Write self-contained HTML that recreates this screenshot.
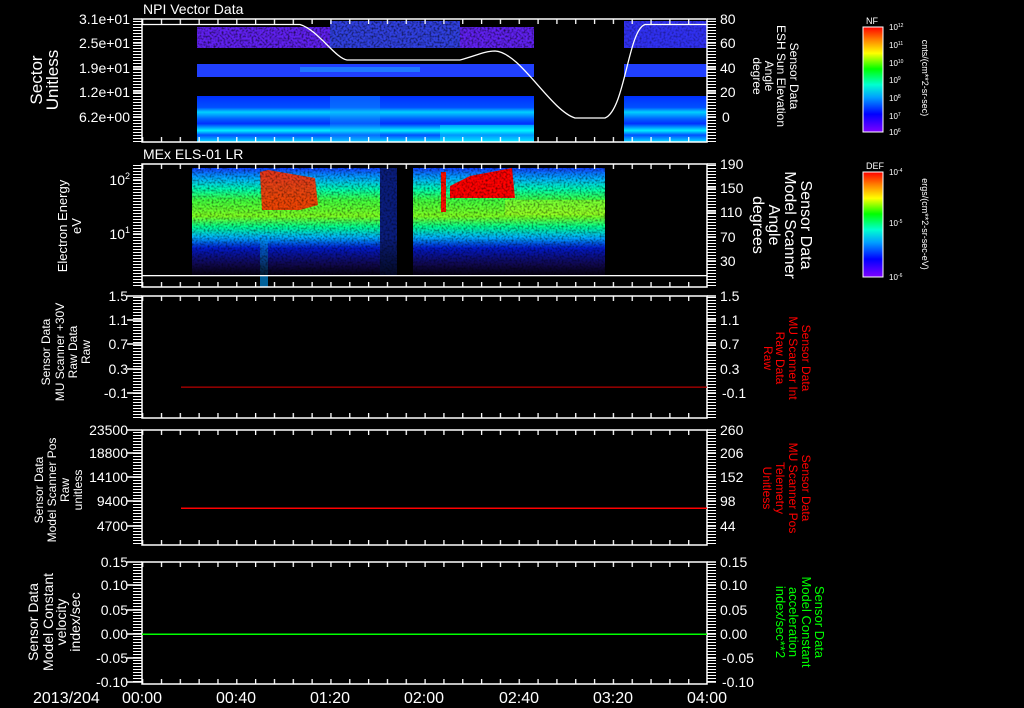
<!DOCTYPE html>
<html><head><meta charset="utf-8"><style>
html,body{margin:0;padding:0;background:#000;width:1024px;height:708px;overflow:hidden}
svg{display:block}
text{font-family:"Liberation Sans",sans-serif;fill:#fff}
</style></head><body>
<svg width="1024" height="708" viewBox="0 0 1024 708" xmlns="http://www.w3.org/2000/svg">
<defs>
<pattern id="mt" width="10" height="3" patternUnits="userSpaceOnUse"><rect x="0" y="0" width="10" height="1" fill="#fff"/></pattern>
<pattern id="xt" width="18.83" height="10" patternUnits="userSpaceOnUse" x="142"><rect x="0" y="0" width="1.3" height="10" fill="#fff"/></pattern>
<linearGradient id="rb" x1="0" y1="1" x2="0" y2="0">
<stop offset="0" stop-color="#8000ff"/><stop offset="0.17" stop-color="#0000ff"/><stop offset="0.33" stop-color="#00a0ff"/><stop offset="0.45" stop-color="#00ffd0"/><stop offset="0.6" stop-color="#00ff00"/><stop offset="0.75" stop-color="#ffff00"/><stop offset="0.88" stop-color="#ff8000"/><stop offset="1" stop-color="#ff0000"/></linearGradient>
<linearGradient id="p2" x1="0" y1="0" x2="0" y2="1">
<stop offset="0" stop-color="#1040ff"/><stop offset="0.1" stop-color="#00b0ff"/><stop offset="0.2" stop-color="#00ffb0"/><stop offset="0.3" stop-color="#40ff40"/><stop offset="0.45" stop-color="#80ff20"/><stop offset="0.55" stop-color="#00ff90"/><stop offset="0.65" stop-color="#00b0ff"/><stop offset="0.75" stop-color="#0020ff"/><stop offset="0.9" stop-color="#2010a0"/><stop offset="1" stop-color="#100040"/></linearGradient>
<linearGradient id="dk" x1="0" y1="0" x2="0" y2="1">
<stop offset="0" stop-color="#000" stop-opacity="0"/><stop offset="0.65" stop-color="#000" stop-opacity="0"/><stop offset="1" stop-color="#000" stop-opacity="0.7"/></linearGradient>
<linearGradient id="b1" x1="0" y1="0" x2="0" y2="1">
<stop offset="0" stop-color="#0030ff"/><stop offset="0.25" stop-color="#0050ff"/><stop offset="0.35" stop-color="#00d0ff"/><stop offset="0.5" stop-color="#0060ff"/><stop offset="0.6" stop-color="#0030ff"/><stop offset="0.75" stop-color="#00f0ff"/><stop offset="0.85" stop-color="#0050ff"/><stop offset="1" stop-color="#00e0ff"/></linearGradient>
<filter id="nz"><feTurbulence type="fractalNoise" baseFrequency="0.5" numOctaves="1" seed="3"/><feColorMatrix values="0 0 0 0 0 0 0 0 0 0 0 0 0 0 0 0 0 0 -2.2 1.3"/><feComposite in2="SourceGraphic" operator="in"/></filter>
</defs>

<text x="143" y="14" font-size="14">NPI Vector Data</text>
<text x="143" y="159" font-size="14">MEx ELS-01 LR</text>

<!-- Panel 1 data -->
<rect x="197" y="27" width="337" height="21" fill="#6020f0"/>
<rect x="330" y="21" width="130" height="27" fill="#3040e0"/>
<rect x="197" y="64" width="337" height="13" fill="#2040ff"/>
<rect x="300" y="67" width="120" height="5" fill="#20a0ff" opacity="0.6"/>
<rect x="197" y="96" width="337" height="46" fill="url(#b1)"/>
<rect x="330" y="96" width="50" height="46" fill="#10a0ff" opacity="0.35"/>
<rect x="440" y="125" width="94" height="17" fill="#00ffff" opacity="0.4"/>
<rect x="624" y="21" width="83" height="27" fill="#3030f0"/>
<rect x="624" y="64" width="83" height="13" fill="#2040ff"/>
<rect x="624" y="96" width="83" height="46" fill="url(#b1)"/>
<rect x="197" y="21" width="337" height="27" fill="#000" filter="url(#nz)" opacity="0.7"/>
<rect x="624" y="21" width="83" height="27" fill="#000" filter="url(#nz)" opacity="0.4"/>
<path d="M142 24.5 L300 24.5 C318 30 335 58 347 60 L460 60 C475 56 485 51 495 51 C520 52 550 110 575 118 L605 118 C625 110 628 30 645 24.5 L707 24.5" stroke="#fff" stroke-width="1.3" fill="none"/>

<!-- Panel 2 data -->
<rect x="192" y="168" width="188" height="107" fill="url(#p2)"/>
<rect x="380" y="168" width="17" height="107" fill="#1030d0" opacity="0.6"/>
<rect x="413" y="168" width="192" height="107" fill="url(#p2)"/>
<path d="M260 172 L268 170 L315 178 L318 205 L300 210 L262 210 Z" fill="#ff3000" opacity="0.9"/>
<path d="M450 198 L450 186 L470 176 L512 168 L515 198 Z" fill="#ff0000"/>
<rect x="441" y="172" width="5" height="40" fill="#ff1000"/>
<rect x="505" y="200" width="100" height="15" fill="#c0ff20" opacity="0.4"/>
<rect x="260" y="235" width="8" height="52" fill="#00a0ff" opacity="0.6"/>
<rect x="192" y="168" width="413" height="107" fill="#000" filter="url(#nz)" opacity="0.55"/>
<rect x="192" y="168" width="413" height="107" fill="url(#dk)"/>
<rect x="142" y="275" width="565" height="1.3" fill="#fff"/>

<g fill="none" stroke="#fff" stroke-width="1.5">
<rect x="142" y="19" width="565" height="123"/>
<rect x="142" y="164" width="565" height="123"/>
<rect x="142" y="296" width="565" height="122"/>
<rect x="142" y="430" width="565" height="115"/>
<rect x="142" y="562" width="565" height="122"/>
</g>
<g fill="url(#mt)">
<rect x="133" y="20" width="9" height="122"/><rect x="707" y="20" width="9" height="122"/>
<rect x="133" y="165" width="9" height="122"/><rect x="707" y="165" width="9" height="122"/>
<rect x="133" y="297" width="9" height="121"/><rect x="707" y="297" width="9" height="121"/>
<rect x="133" y="431" width="9" height="114"/><rect x="707" y="431" width="9" height="114"/>
<rect x="133" y="563" width="9" height="121"/><rect x="707" y="563" width="9" height="121"/>
</g>
<g fill="url(#xt)">
<rect x="142" y="19" width="565" height="5"/><rect x="142" y="137" width="565" height="5"/>
<rect x="142" y="164" width="565" height="5"/><rect x="142" y="282" width="565" height="5"/>
<rect x="142" y="296" width="565" height="5"/><rect x="142" y="413" width="565" height="5"/>
<rect x="142" y="430" width="565" height="5"/><rect x="142" y="540" width="565" height="5"/>
<rect x="142" y="562" width="565" height="5"/><rect x="142" y="679" width="565" height="5"/>
</g>
<g stroke="#fff" stroke-width="1.5">
<path d="M133 19H142M133 43H142M133 68H142M133 92H142M133 117H142M707 43H716M707 68H716M707 92H716M707 117H716M707 19H716"/>
<path d="M133 180H142M133 234H142M707 188H716M707 212H716M707 237H716M707 261H716M707 164H716"/>
<path d="M127 296H142M127 320H142M127 344H142M127 369H142M127 393H142M707 296H716M707 320H716M707 344H716M707 369H716M707 393H716"/>
<path d="M127 430H142M127 453H142M127 477H142M127 501H142M127 526H142M707 430H716M707 453H716M707 477H716M707 501H716M707 526H716"/>
<path d="M127 562H142M127 585H142M127 610H142M127 634H142M127 658H142M127 682H142M707 562H716M707 585H716M707 610H716M707 634H716M707 658H716M707 682H716"/>
</g>
<rect x="181" y="386.5" width="526" height="1.3" fill="#b00000"/>
<rect x="181" y="507.5" width="526" height="1.5" fill="#ff0000"/>
<rect x="142" y="633.5" width="565" height="1.5" fill="#00ff00"/>

<g font-size="14" text-anchor="end">
<text x="130" y="24">3.1e+01</text><text x="130" y="48">2.5e+01</text><text x="130" y="73">1.9e+01</text><text x="130" y="97">1.2e+01</text><text x="130" y="122">6.2e+00</text>
<text x="130" y="185">10<tspan font-size="9" dy="-6">2</tspan></text><text x="130" y="239">10<tspan font-size="9" dy="-6">1</tspan></text>
<text x="128" y="301">1.5</text><text x="128" y="325">1.1</text><text x="128" y="349">0.7</text><text x="128" y="374">0.3</text><text x="128" y="398">-0.1</text>
<text x="128" y="435">23500</text><text x="128" y="458">18800</text><text x="128" y="482">14100</text><text x="128" y="506">9400</text><text x="128" y="531">4700</text>
<text x="128" y="567">0.15</text><text x="128" y="590">0.10</text><text x="128" y="615">0.05</text><text x="128" y="639">0.00</text><text x="128" y="663">-0.05</text><text x="128" y="687">-0.10</text>
</g>
<g font-size="14">
<text x="720" y="24">80</text><text x="720" y="48">60</text><text x="720" y="73">40</text><text x="720" y="97">20</text><text x="722" y="122">0</text>
<text x="720" y="169">190</text><text x="720" y="193">150</text><text x="720" y="217">110</text><text x="720" y="242">70</text><text x="720" y="266">30</text>
<text x="720" y="301">1.5</text><text x="720" y="325">1.1</text><text x="720" y="349">0.7</text><text x="720" y="374">0.3</text><text x="722" y="398">-0.1</text>
<text x="720" y="435">260</text><text x="720" y="458">206</text><text x="720" y="482">152</text><text x="720" y="506">98</text><text x="720" y="531">44</text>
<text x="720" y="567">0.15</text><text x="720" y="590">0.10</text><text x="720" y="615">0.05</text><text x="720" y="639">0.00</text><text x="722" y="663">-0.05</text><text x="722" y="687">-0.10</text>
</g>
<g font-size="16">
<text x="33" y="703">2013/204</text>
<text x="142" y="703" text-anchor="middle">00:00</text>
<text x="236" y="703" text-anchor="middle">00:40</text>
<text x="330" y="703" text-anchor="middle">01:20</text>
<text x="424" y="703" text-anchor="middle">02:00</text>
<text x="519" y="703" text-anchor="middle">02:40</text>
<text x="613" y="703" text-anchor="middle">03:20</text>
<text x="707" y="703" text-anchor="middle">04:00</text>
</g>

<g text-anchor="middle">
<text font-size="17" transform="translate(42,80) rotate(-90)">Sector</text>
<text font-size="17" transform="translate(58,80) rotate(-90)">Unitless</text>
<text font-size="13" transform="translate(67,226) rotate(-90)">Electron Energy</text>
<text font-size="13" transform="translate(81,226) rotate(-90)">eV</text>
<text font-size="12" transform="translate(50,352) rotate(-90)">Sensor Data</text>
<text font-size="12" transform="translate(64,352) rotate(-90)">MU Scanner +30V</text>
<text font-size="12" transform="translate(77,352) rotate(-90)">Raw Data</text>
<text font-size="12" transform="translate(90,352) rotate(-90)">Raw</text>
<text font-size="12" transform="translate(43,490) rotate(-90)">Sensor Data</text>
<text font-size="12" transform="translate(56,490) rotate(-90)">Model Scanner Pos</text>
<text font-size="12" transform="translate(69,490) rotate(-90)">Raw</text>
<text font-size="12" transform="translate(82,490) rotate(-90)">unitless</text>
<text font-size="14" transform="translate(38,622) rotate(-90)">Sensor Data</text>
<text font-size="14" transform="translate(53,622) rotate(-90)">Model Constant</text>
<text font-size="14" transform="translate(66,622) rotate(-90)">velocity</text>
<text font-size="14" transform="translate(80,622) rotate(-90)">index/sec</text>
</g>
<g text-anchor="middle">
<text font-size="12" transform="translate(790,76) rotate(90)">Sensor Data</text>
<text font-size="12" transform="translate(777,76) rotate(90)">ESH Sun Elevation</text>
<text font-size="12" transform="translate(765,76) rotate(90)">Angle</text>
<text font-size="12" transform="translate(753,76) rotate(90)">degree</text>
<text font-size="16" transform="translate(801,225) rotate(90)">Sensor Data</text>
<text font-size="16" transform="translate(785,225) rotate(90)">Model Scanner</text>
<text font-size="16" transform="translate(769,225) rotate(90)">Angle</text>
<text font-size="16" transform="translate(753,225) rotate(90)">degrees</text>
</g>
<g text-anchor="middle" font-size="12">
<text style="fill:#f00" transform="translate(802,358) rotate(90)">Sensor Data</text>
<text style="fill:#f00" transform="translate(789,358) rotate(90)">MU Scanner Int</text>
<text style="fill:#f00" transform="translate(776,358) rotate(90)">Raw Data</text>
<text style="fill:#f00" transform="translate(764,358) rotate(90)">Raw</text>
<text style="fill:#f00" transform="translate(802,488) rotate(90)">Sensor Data</text>
<text style="fill:#f00" transform="translate(789,488) rotate(90)">MU Scanner Pos</text>
<text style="fill:#f00" transform="translate(776,488) rotate(90)">Telemetry</text>
<text style="fill:#f00" transform="translate(763,488) rotate(90)">Unitless</text>
<text style="fill:#0f0" font-size="13" transform="translate(815,622) rotate(90)">Sensor Data</text>
<text style="fill:#0f0" font-size="13" transform="translate(802,622) rotate(90)">Model Constant</text>
<text style="fill:#0f0" font-size="13" transform="translate(789,622) rotate(90)">acceleration</text>
<text style="fill:#0f0" font-size="13" transform="translate(776,622) rotate(90)">index/sec**2</text>
</g>

<rect x="863" y="27" width="20" height="105" fill="url(#rb)" stroke="#fff" stroke-width="1"/>
<text x="866" y="24" font-size="9">NF</text>
<g font-size="8">
<text x="889" y="30">10<tspan font-size="5" dy="-3">12</tspan></text>
<text x="889" y="48">10<tspan font-size="5" dy="-3">11</tspan></text>
<text x="889" y="66">10<tspan font-size="5" dy="-3">10</tspan></text>
<text x="889" y="83">10<tspan font-size="5" dy="-3">9</tspan></text>
<text x="889" y="101">10<tspan font-size="5" dy="-3">8</tspan></text>
<text x="889" y="119">10<tspan font-size="5" dy="-3">7</tspan></text>
<text x="889" y="135">10<tspan font-size="5" dy="-3">6</tspan></text>
</g>
<text font-size="9" text-anchor="middle" transform="translate(922,78) rotate(90)">cnts/(cm**2-sr-sec)</text>
<rect x="863" y="172" width="20" height="105" fill="url(#rb)" stroke="#fff" stroke-width="1"/>
<text x="866" y="169" font-size="9">DEF</text>
<g font-size="8">
<text x="889" y="175">10<tspan font-size="5" dy="-3">-4</tspan></text>
<text x="889" y="226">10<tspan font-size="5" dy="-3">-5</tspan></text>
<text x="889" y="280">10<tspan font-size="5" dy="-3">-6</tspan></text>
</g>
<text font-size="9" text-anchor="middle" transform="translate(922,224) rotate(90)">ergs/(cm**2-sr-sec-eV)</text>
</svg>
</body></html>
